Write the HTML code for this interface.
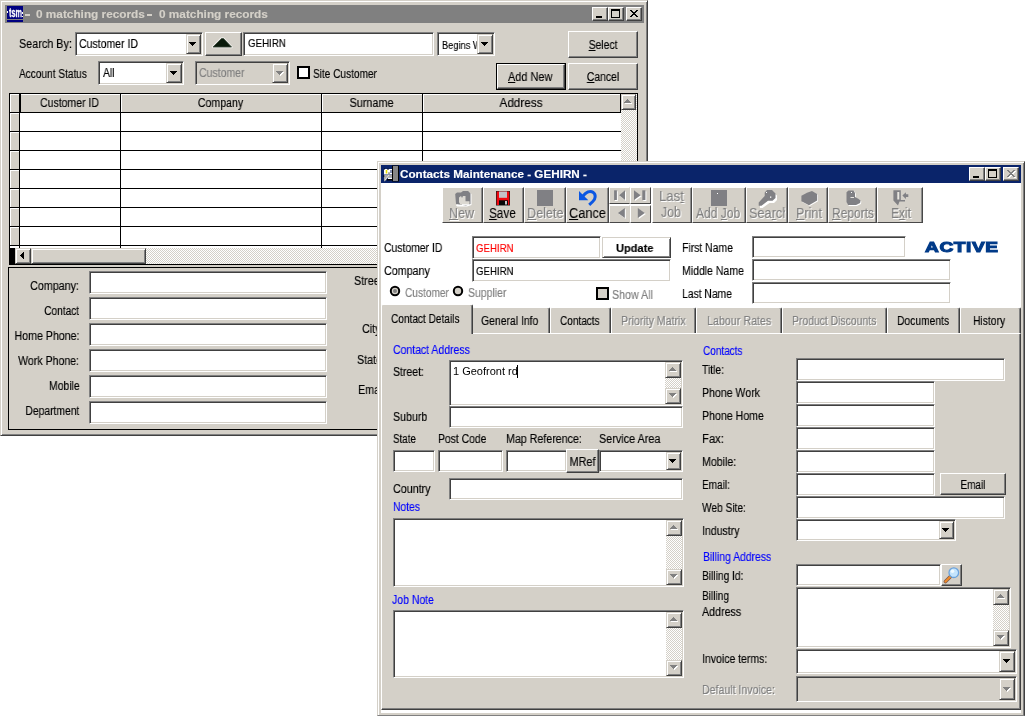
<!DOCTYPE html>
<html><head><meta charset="utf-8"><title>Contacts Maintenance</title>
<style>
html,body{margin:0;padding:0;overflow:hidden;}
body{width:1025px;height:716px;background:#fff;position:relative;overflow:hidden;font-family:"Liberation Sans",sans-serif;font-size:12px;color:#000;}
div,svg{position:absolute;box-sizing:border-box;}
.t{white-space:nowrap;line-height:14px;font-size:12px;will-change:transform;-webkit-text-stroke:0.15px;}
.b{font-weight:bold;}
.sk{border:1px solid;border-color:#808080 #fff #fff #808080;box-shadow:inset 1px 1px 0 #404040,inset -1px -1px 0 #d4d0c8;}
.rb{background:#d4d0c8;border:1px solid;border-color:#fff #404040 #404040 #fff;box-shadow:inset -1px -1px 0 #808080,inset 1px 1px 0 #d4d0c8;}
.sb{background:#d4d0c8;border:1px solid;border-color:#d4d0c8 #404040 #404040 #d4d0c8;box-shadow:inset 1px 1px 0 #fff,inset -1px -1px 0 #808080;}
.win{background:#d4d0c8;border:1px solid;border-color:#d4d0c8 #404040 #404040 #d4d0c8;box-shadow:inset 1px 1px 0 #fff,inset -1px -1px 0 #808080;}
.trk{background-color:#e9e7e3;background-image:linear-gradient(45deg,#fff 25%,transparent 25%,transparent 75%,#fff 75%),linear-gradient(45deg,#fff 25%,transparent 25%,transparent 75%,#fff 75%);background-size:2px 2px;background-position:0 0,1px 1px;background-color:#d4d0c8;}
.c{text-align:center;}
.r{text-align:right;}
u{text-decoration:underline;}
</style></head><body>
<div class="win" style="left:0px;top:0px;width:648px;height:436px;"></div>
<div class="" style="left:5px;top:5px;width:639px;height:18px;background:#808080;"></div>
<div class="" style="left:7px;top:6px;width:16px;height:13px;background:#000080;"></div>
<div class="" style="left:7px;top:20px;width:16px;height:2px;background:#000080;"></div>
<div class="t" style="top:6.0px;font-size:12px;line-height:14px;font-weight:bold;left:8.5px;transform-origin:0 0;transform:scaleX(0.604);color:#fff;-webkit-text-stroke:0.3px #fff;">tsm</div>
<div class="" style="left:7px;top:11px;width:1px;height:2px;background:#fff;"></div>
<div class="" style="left:21.5px;top:12px;width:1px;height:1.5px;background:#fff;"></div>
<div class="" style="left:21.5px;top:15.5px;width:1px;height:1.5px;background:#fff;"></div>
<div class="" style="left:25px;top:14px;width:4.5px;height:1.5px;background:#d4d0c8;"></div>
<div class="" style="left:147px;top:14px;width:4.5px;height:1.5px;background:#d4d0c8;"></div>
<div class="t" style="top:7.2px;font-size:11px;line-height:14px;font-weight:bold;left:35.5px;transform-origin:0 0;transform:scaleX(1.073);color:#d4d0c8;">0 matching records</div>
<div class="t" style="top:7.2px;font-size:11px;line-height:14px;font-weight:bold;left:158.8px;transform-origin:0 0;transform:scaleX(1.073);color:#d4d0c8;">0 matching records</div>
<div class="rb" style="left:592px;top:7px;width:16px;height:14px;"></div>
<div class="" style="left:596px;top:16px;width:6px;height:2px;background:#000;"></div>
<div class="rb" style="left:608px;top:7px;width:16px;height:14px;"></div>
<div class="" style="left:611px;top:9px;width:9px;height:9px;border:1px solid #000;border-top:2px solid #000;"></div>
<div class="rb" style="left:626px;top:7px;width:16px;height:14px;"></div>
<svg style="left:630px;top:10px" width="9" height="8" shape-rendering="crispEdges"><path d="M0 0h2v1h1v1h2v-1h1v-1h2v1h-1v1h-1v1h-1v1h1v1h1v1h1v1h-2v-1h-1v-1h-2v1h-1v1h-2v-1h1v-1h1v-1h1v-1h-1v-1h-1v-1h-1z" fill="#000"/></svg>
<div class="t" style="top:37.2px;font-size:12.5px;line-height:14.5px;left:19.0px;transform-origin:0 0;transform:scaleX(0.865);">Search By:</div>
<div class="sk" style="left:75px;top:32px;width:128px;height:24px;background:#fff;"></div>
<div class="sb" style="left:186px;top:34px;width:15px;height:20px;"></div>
<svg class="a" style="left:189px;top:42px" width="7" height="4" shape-rendering="crispEdges"><path d="M0 0h7v1h-1v1h-1v1h-1v1h-1v-1h-1v-1h-1v-1h-1z" fill="#000"/></svg>
<div class="t" style="top:37.0px;font-size:12.5px;line-height:14.5px;left:79.1px;transform-origin:0 0;transform:scaleX(0.840);color:#000;">Customer ID</div>
<div class="rb" style="left:205px;top:32px;width:37px;height:24px;"></div>
<svg style="left:211px;top:35px" width="23" height="15"><path d="M10.500 3.500 h2 L20.500 12 H2 Z" fill="#0a1a0a" stroke="#eceae6" stroke-width="2.500" stroke-linejoin="round"/><path d="M10.500 3.500 h2 L20.500 12 H2 Z" fill="#0a1a0a" stroke="#3a4a3a" stroke-width="0.800" stroke-linejoin="round"/></svg>
<div class="sk" style="left:243px;top:32px;width:191px;height:24px;background:#fff;"></div>
<div class="t" style="top:36.0px;font-size:11px;line-height:14px;left:247.5px;transform-origin:0 0;transform:scaleX(0.886);">GEHIRN</div>
<div class="sk" style="left:437px;top:32px;width:58px;height:24px;background:#fff;"></div>
<div class="sb" style="left:477px;top:34px;width:16px;height:20px;"></div>
<svg class="a" style="left:481px;top:42px" width="7" height="4" shape-rendering="crispEdges"><path d="M0 0h7v1h-1v1h-1v1h-1v1h-1v-1h-1v-1h-1v-1h-1z" fill="#000"/></svg>
<div class="t" style="top:37.6px;font-size:11px;line-height:14px;left:441.6px;transform-origin:0 0;transform:scaleX(0.840);color:#000;width:41.5px;overflow:hidden;">Begins W</div>
<div class="rb" style="left:568px;top:31px;width:70px;height:27px;"><div class="t" style="left:0;top:6px;width:68px;text-align:center;transform:scaleX(0.830);font-size:12.5px;"><u>S</u>elect</div></div>
<div class="t" style="top:66.7px;font-size:12.5px;line-height:14.5px;left:18.5px;transform-origin:0 0;transform:scaleX(0.808);">Account Status</div>
<div class="sk" style="left:98px;top:61px;width:86px;height:24px;background:#fff;"></div>
<div class="sb" style="left:166px;top:63px;width:16px;height:20px;"></div>
<svg class="a" style="left:170px;top:71px" width="7" height="4" shape-rendering="crispEdges"><path d="M0 0h7v1h-1v1h-1v1h-1v1h-1v-1h-1v-1h-1v-1h-1z" fill="#000"/></svg>
<div class="t" style="top:66.0px;font-size:12.5px;line-height:14.5px;left:102.6px;transform-origin:0 0;transform:scaleX(0.830);color:#000;">All</div>
<div class="sk" style="left:195px;top:61px;width:95px;height:24px;background:#d4d0c8;"></div>
<div class="sb" style="left:272px;top:63px;width:16px;height:20px;"></div>
<svg class="a" style="left:277px;top:72px" width="7" height="4" shape-rendering="crispEdges"><path d="M0 0h7v1h-1v1h-1v1h-1v1h-1v-1h-1v-1h-1v-1h-1z" fill="#fff"/></svg>
<svg class="a" style="left:276px;top:71px" width="7" height="4" shape-rendering="crispEdges"><path d="M0 0h7v1h-1v1h-1v1h-1v1h-1v-1h-1v-1h-1v-1h-1z" fill="#808080"/></svg>
<div class="t" style="top:66.0px;font-size:12.5px;line-height:14.5px;left:199.1px;transform-origin:0 0;transform:scaleX(0.840);color:#808080;">Customer</div>
<div class="" style="left:297px;top:66px;width:13px;height:13px;background:#fff;border:2px solid #000;"></div>
<div class="t" style="top:66.9px;font-size:12.5px;line-height:14.5px;left:313.0px;transform-origin:0 0;transform:scaleX(0.807);">Site Customer</div>
<div class="" style="left:496px;top:63px;width:70px;height:27px;background:#000;"></div>
<div class="rb" style="left:497px;top:64px;width:68px;height:25px;"></div>
<div class="t" style="top:70.4px;font-size:12.5px;line-height:14.5px;left:507.5px;transform-origin:0 0;transform:scaleX(0.873);"><u>A</u>dd New</div>
<div class="rb" style="left:568px;top:63px;width:70px;height:27px;"><div class="t" style="left:0;top:6px;width:68px;text-align:center;transform:scaleX(0.830);font-size:12.5px;"><u>C</u>ancel</div></div>
<div class="" style="left:9px;top:93px;width:629px;height:172px;background:#fff;border:1px solid #000;"></div>
<div class="" style="left:10px;top:94px;width:610px;height:18px;background:#d4d0c8;"></div>
<div class="" style="left:10px;top:94px;width:9px;height:152px;background:#d4d0c8;"></div>
<div class="" style="left:10px;top:94px;width:9px;height:18px;border-left:1px solid #fff;border-top:1px solid #fff;"></div>
<div class="" style="left:10px;top:113px;width:9px;height:18px;border-left:1px solid #fff;border-top:1px solid #fff;"></div>
<div class="" style="left:10px;top:132px;width:9px;height:18px;border-left:1px solid #fff;border-top:1px solid #fff;"></div>
<div class="" style="left:10px;top:151px;width:9px;height:18px;border-left:1px solid #fff;border-top:1px solid #fff;"></div>
<div class="" style="left:10px;top:170px;width:9px;height:18px;border-left:1px solid #fff;border-top:1px solid #fff;"></div>
<div class="" style="left:10px;top:189px;width:9px;height:18px;border-left:1px solid #fff;border-top:1px solid #fff;"></div>
<div class="" style="left:10px;top:208px;width:9px;height:18px;border-left:1px solid #fff;border-top:1px solid #fff;"></div>
<div class="" style="left:10px;top:227px;width:9px;height:18px;border-left:1px solid #fff;border-top:1px solid #fff;"></div>
<div class="" style="left:20px;top:94px;width:1px;height:18px;background:#fff;"></div>
<div class="" style="left:121px;top:94px;width:1px;height:18px;background:#fff;"></div>
<div class="" style="left:322px;top:94px;width:1px;height:18px;background:#fff;"></div>
<div class="" style="left:423px;top:94px;width:1px;height:18px;background:#fff;"></div>
<div class="" style="left:20px;top:94px;width:600px;height:1px;background:#fff;"></div>
<div class="" style="left:19px;top:93px;width:1px;height:155px;background:#000;"></div>
<div class="" style="left:120px;top:93px;width:1px;height:155px;background:#000;"></div>
<div class="" style="left:321px;top:93px;width:1px;height:155px;background:#000;"></div>
<div class="" style="left:422px;top:93px;width:1px;height:155px;background:#000;"></div>
<div class="" style="left:620px;top:93px;width:1px;height:20px;background:#000;"></div>
<div class="" style="left:20px;top:93px;width:1px;height:19px;background:#000;"></div>
<div class="" style="left:9px;top:112px;width:612px;height:1px;background:#000;"></div>
<div class="" style="left:9px;top:131px;width:612px;height:1px;background:#000;"></div>
<div class="" style="left:9px;top:150px;width:612px;height:1px;background:#000;"></div>
<div class="" style="left:9px;top:169px;width:612px;height:1px;background:#000;"></div>
<div class="" style="left:9px;top:188px;width:612px;height:1px;background:#000;"></div>
<div class="" style="left:9px;top:207px;width:612px;height:1px;background:#000;"></div>
<div class="" style="left:9px;top:226px;width:612px;height:1px;background:#000;"></div>
<div class="" style="left:9px;top:245px;width:612px;height:1px;background:#000;"></div>
<div class="t" style="top:96.1px;font-size:12.5px;line-height:14.5px;left:19px;width:101px;text-align:center;transform-origin:50% 0;transform:scaleX(0.840);">Customer ID</div>
<div class="t" style="top:96.1px;font-size:12.5px;line-height:14.5px;left:120px;width:201px;text-align:center;transform-origin:50% 0;transform:scaleX(0.849);">Company</div>
<div class="t" style="top:96.1px;font-size:12.5px;line-height:14.5px;left:321px;width:101px;text-align:center;transform-origin:50% 0;transform:scaleX(0.866);">Surname</div>
<div class="t" style="top:96.1px;font-size:12.5px;line-height:14.5px;left:422px;width:198px;text-align:center;transform-origin:50% 0;transform:scaleX(0.936);">Address</div>
<div class="trk" style="left:621px;top:94px;width:16px;height:154px;"></div>
<div class="sb" style="left:621px;top:94px;width:15px;height:16px;"></div>
<svg class="a" style="left:625px;top:100px" width="7" height="4" shape-rendering="crispEdges"><path d="M3 0h1v1h1v1h1v1h1v1h-7v-1h1v-1h1v-1h1z" fill="#fff"/></svg>
<svg class="a" style="left:624px;top:99px" width="7" height="4" shape-rendering="crispEdges"><path d="M3 0h1v1h1v1h1v1h1v1h-7v-1h1v-1h1v-1h1z" fill="#808080"/></svg>
<div class="trk" style="left:10px;top:248px;width:627px;height:16px;"></div>
<div class="" style="left:9px;top:248px;width:6px;height:17px;background:#000;"></div>
<div class="sb" style="left:15px;top:248px;width:16px;height:16px;"></div>
<svg class="a" style="left:20px;top:252px" width="4" height="7" shape-rendering="crispEdges"><path d="M3 0h1v7h-1v-1h-1v-1h-1v-1h-1v-1h1v-1h1v-1h1z" fill="#000"/></svg>
<div class="sb" style="left:31px;top:248px;width:115px;height:16px;"></div>
<div class="" style="left:8px;top:267px;width:632px;height:163px;border:1px solid #000;"></div>
<div class="t" style="top:279.4px;font-size:12.5px;line-height:14.5px;right:945.6px;transform-origin:100% 0;transform:scaleX(0.858);">Company:</div>
<div class="sk" style="left:89px;top:271px;width:238px;height:23px;background:#fff;"></div>
<div class="t" style="top:304.4px;font-size:12.5px;line-height:14.5px;right:945.6px;transform-origin:100% 0;transform:scaleX(0.810);">Contact</div>
<div class="sk" style="left:89px;top:297px;width:238px;height:23px;background:#fff;"></div>
<div class="t" style="top:329.4px;font-size:12.5px;line-height:14.5px;right:945.6px;transform-origin:100% 0;transform:scaleX(0.849);">Home Phone:</div>
<div class="sk" style="left:89px;top:323px;width:238px;height:23px;background:#fff;"></div>
<div class="t" style="top:354.4px;font-size:12.5px;line-height:14.5px;right:945.6px;transform-origin:100% 0;transform:scaleX(0.846);">Work Phone:</div>
<div class="sk" style="left:89px;top:349px;width:238px;height:23px;background:#fff;"></div>
<div class="t" style="top:379.4px;font-size:12.5px;line-height:14.5px;right:945.6px;transform-origin:100% 0;transform:scaleX(0.839);">Mobile</div>
<div class="sk" style="left:89px;top:375px;width:238px;height:23px;background:#fff;"></div>
<div class="t" style="top:403.9px;font-size:12.5px;line-height:14.5px;right:945.6px;transform-origin:100% 0;transform:scaleX(0.825);">Department</div>
<div class="sk" style="left:89px;top:401px;width:238px;height:23px;background:#fff;"></div>
<div class="t" style="top:274.0px;font-size:12.5px;line-height:14.5px;left:353.5px;transform-origin:0 0;transform:scaleX(0.860);">Street:</div>
<div class="t" style="top:322.2px;font-size:12.5px;line-height:14.5px;left:362.3px;transform-origin:0 0;transform:scaleX(0.860);">City:</div>
<div class="t" style="top:353.1px;font-size:12.5px;line-height:14.5px;left:357.3px;transform-origin:0 0;transform:scaleX(0.860);">State:</div>
<div class="t" style="top:383.2px;font-size:12.5px;line-height:14.5px;left:358.3px;transform-origin:0 0;transform:scaleX(0.860);">Email:</div>
<div class="win" style="left:377px;top:161px;width:648px;height:555px;border-bottom-color:#808080;box-shadow:inset 1px 1px 0 #fff,inset -1px 0 0 #808080;"></div>
<div class="" style="left:381px;top:165px;width:640px;height:548px;background:#fff;"></div>
<div class="" style="left:381px;top:165px;width:640px;height:18px;background:#0a246a;"></div>
<div class="t" style="top:167.4px;font-size:11px;line-height:14px;font-weight:bold;left:400.1px;transform-origin:0 0;transform:scaleX(1.062);color:#fff;">Contacts Maintenance - GEHIRN -</div>
<svg style="left:383px;top:165px" width="17" height="18" viewBox="383 165 17 18"><rect x="392" y="165.500" width="7" height="16" fill="#000"/><rect x="393" y="166" width="5" height="15" fill="#868686"/><rect x="384" y="169" width="8" height="5.500" fill="#fff"/><rect x="384" y="168.500" width="1" height="1" fill="#000"/><rect x="387.500" y="168.500" width="1" height="1.500" fill="#000"/><rect x="385.700" y="170" width="1.600" height="3.500" fill="#e8e000"/><rect x="388.500" y="172.500" width="1" height="1.200" fill="#000"/><rect x="390.500" y="170" width="1" height="3" fill="#0a246a"/><path d="M384 175h8v2.500h-4l-3 3.800h-1z" fill="#a8a8a8"/><path d="M385 180l4-5" stroke="#e0e0e0" stroke-width="1"/><rect x="388" y="177.500" width="4" height="1.500" fill="#fff"/><rect x="387" y="179" width="5" height="1.500" fill="#000"/><rect x="383.300" y="175.300" width="1" height="1.500" fill="#000"/></svg>
<div class="rb" style="left:969px;top:167px;width:16px;height:14px;"></div>
<div class="" style="left:973px;top:176px;width:6px;height:2px;background:#000;"></div>
<div class="rb" style="left:985px;top:167px;width:16px;height:14px;"></div>
<div class="" style="left:988px;top:169px;width:9px;height:9px;border:1px solid #000;border-top:2px solid #000;"></div>
<div class="rb" style="left:1003px;top:167px;width:16px;height:14px;"></div>
<svg style="left:1007px;top:170px" width="10" height="9" shape-rendering="crispEdges"><path d="M1 1h2v1h1v1h2v-1h1v-1h2v1h-1v1h-1v1h-1v1h1v1h1v1h1v1h-2v-1h-1v-1h-2v1h-1v1h-2v-1h1v-1h1v-1h1v-1h-1v-1h-1v-1h-1z" fill="#fff"/><path d="M0 0h2v1h1v1h2v-1h1v-1h2v1h-1v1h-1v1h-1v1h1v1h1v1h1v1h-2v-1h-1v-1h-2v1h-1v1h-2v-1h1v-1h1v-1h1v-1h-1v-1h-1v-1h-1z" fill="#808080"/></svg>
<div class="" style="left:442px;top:187px;width:41px;height:36px;background:#d4d0c8;border:1px solid;border-color:#fff #484848 #484848 #fff;box-shadow:inset -1px 0 0 #8c8c8c;overflow:hidden;"></div>
<div class="" style="left:483px;top:187px;width:41px;height:36px;background:#d4d0c8;border:1px solid;border-color:#fff #484848 #484848 #fff;box-shadow:inset -1px 0 0 #8c8c8c;overflow:hidden;"></div>
<div class="" style="left:524px;top:187px;width:42px;height:36px;background:#d4d0c8;border:1px solid;border-color:#fff #484848 #484848 #fff;box-shadow:inset -1px 0 0 #8c8c8c;overflow:hidden;"></div>
<div class="" style="left:565.5px;top:187px;width:43.0px;height:36px;background:#d4d0c8;border:1px solid;border-color:#fff #484848 #484848 #fff;box-shadow:inset -1px 0 0 #8c8c8c;overflow:hidden;"></div>
<div class="" style="left:651.5px;top:187px;width:40.0px;height:36px;background:#d4d0c8;border:1px solid;border-color:#fff #484848 #484848 #fff;box-shadow:inset -1px 0 0 #8c8c8c;overflow:hidden;"></div>
<div class="" style="left:691.5px;top:187px;width:54.0px;height:36px;background:#d4d0c8;border:1px solid;border-color:#fff #484848 #484848 #fff;box-shadow:inset -1px 0 0 #8c8c8c;overflow:hidden;"></div>
<div class="" style="left:745.5px;top:187px;width:42.5px;height:36px;background:#d4d0c8;border:1px solid;border-color:#fff #484848 #484848 #fff;box-shadow:inset -1px 0 0 #8c8c8c;overflow:hidden;"></div>
<div class="" style="left:788.2px;top:187px;width:39.799999999999955px;height:36px;background:#d4d0c8;border:1px solid;border-color:#fff #484848 #484848 #fff;box-shadow:inset -1px 0 0 #8c8c8c;overflow:hidden;"></div>
<div class="" style="left:828.2px;top:187px;width:48.799999999999955px;height:36px;background:#d4d0c8;border:1px solid;border-color:#fff #484848 #484848 #fff;box-shadow:inset -1px 0 0 #8c8c8c;overflow:hidden;"></div>
<div class="" style="left:877px;top:187px;width:46px;height:36px;background:#d4d0c8;border:1px solid;border-color:#fff #484848 #484848 #fff;box-shadow:inset -1px 0 0 #8c8c8c;overflow:hidden;"></div>
<div class="t" style="top:205.9px;font-size:14px;line-height:16px;left:450.2px;transform-origin:0 0;transform:scaleX(0.889);color:#fff;-webkit-text-stroke:0.1px;"><u>N</u>ew</div>
<div class="t" style="top:204.9px;font-size:14px;line-height:16px;left:449.2px;transform-origin:0 0;transform:scaleX(0.889);color:#808080;-webkit-text-stroke:0.1px;"><u>N</u>ew</div>
<div class="t" style="top:204.9px;font-size:14px;line-height:16px;left:489.1px;transform-origin:0 0;transform:scaleX(0.837);-webkit-text-stroke:0.1px;"><u>S</u>ave</div>
<div class="t" style="top:205.9px;font-size:14px;line-height:16px;left:527.8px;transform-origin:0 0;transform:scaleX(0.899);color:#fff;-webkit-text-stroke:0.1px;"><u>D</u>elete</div>
<div class="t" style="top:204.9px;font-size:14px;line-height:16px;left:526.8px;transform-origin:0 0;transform:scaleX(0.899);color:#808080;-webkit-text-stroke:0.1px;"><u>D</u>elete</div>
<div class="t" style="top:204.9px;font-size:14px;line-height:16px;left:569.1px;transform-origin:0 0;transform:scaleX(0.910);-webkit-text-stroke:0.1px;width:41px;overflow:hidden;"><u>C</u>ancel</div>
<div class="t" style="top:189.3px;font-size:14px;line-height:16px;left:660.2px;transform-origin:0 0;transform:scaleX(0.941);color:#fff;-webkit-text-stroke:0.1px;">Las<u>t</u></div>
<div class="t" style="top:188.3px;font-size:14px;line-height:16px;left:659.2px;transform-origin:0 0;transform:scaleX(0.941);color:#808080;-webkit-text-stroke:0.1px;">Las<u>t</u></div>
<div class="t" style="top:205.1px;font-size:14px;line-height:16px;left:662.3px;transform-origin:0 0;transform:scaleX(0.882);color:#fff;-webkit-text-stroke:0.1px;">Job</div>
<div class="t" style="top:204.1px;font-size:14px;line-height:16px;left:661.3px;transform-origin:0 0;transform:scaleX(0.882);color:#808080;-webkit-text-stroke:0.1px;">Job</div>
<div class="t" style="top:205.7px;font-size:14px;line-height:16px;left:696.7px;transform-origin:0 0;transform:scaleX(0.862);color:#fff;-webkit-text-stroke:0.1px;">Add <u>J</u>ob</div>
<div class="t" style="top:204.7px;font-size:14px;line-height:16px;left:695.7px;transform-origin:0 0;transform:scaleX(0.862);color:#808080;-webkit-text-stroke:0.1px;">Add <u>J</u>ob</div>
<div class="t" style="top:205.9px;font-size:14px;line-height:16px;left:750.4px;transform-origin:0 0;transform:scaleX(0.910);-webkit-text-stroke:0.1px;color:#fff;width:40px;overflow:hidden;">Sea<u>r</u>ch</div>
<div class="t" style="top:204.9px;font-size:14px;line-height:16px;left:749.4px;transform-origin:0 0;transform:scaleX(0.910);-webkit-text-stroke:0.1px;color:#808080;width:40px;overflow:hidden;">Sea<u>r</u>ch</div>
<div class="t" style="top:205.9px;font-size:14px;line-height:16px;left:797.3px;transform-origin:0 0;transform:scaleX(0.900);color:#fff;-webkit-text-stroke:0.1px;"><u>P</u>rint</div>
<div class="t" style="top:204.9px;font-size:14px;line-height:16px;left:796.3px;transform-origin:0 0;transform:scaleX(0.900);color:#808080;-webkit-text-stroke:0.1px;"><u>P</u>rint</div>
<div class="t" style="top:205.9px;font-size:14px;line-height:16px;left:833.0px;transform-origin:0 0;transform:scaleX(0.855);color:#fff;-webkit-text-stroke:0.1px;"><u>R</u>eports</div>
<div class="t" style="top:204.9px;font-size:14px;line-height:16px;left:832.0px;transform-origin:0 0;transform:scaleX(0.855);color:#808080;-webkit-text-stroke:0.1px;"><u>R</u>eports</div>
<div class="t" style="top:205.9px;font-size:14px;line-height:16px;left:891.6px;transform-origin:0 0;transform:scaleX(0.853);color:#fff;-webkit-text-stroke:0.1px;">E<u>x</u>it</div>
<div class="t" style="top:204.9px;font-size:14px;line-height:16px;left:890.6px;transform-origin:0 0;transform:scaleX(0.853);color:#808080;-webkit-text-stroke:0.1px;">E<u>x</u>it</div>
<div class="" style="left:609px;top:187px;width:21px;height:17px;background:#d4d0c8;border:1px solid;border-color:#fff #d4d0c8 #484848 #fff;"></div>
<div class="" style="left:630px;top:187px;width:21px;height:17px;background:#d4d0c8;border:1px solid;border-color:#fff #484848 #484848 #fff;"></div>
<div class="" style="left:609px;top:205px;width:21px;height:18px;background:#d4d0c8;border:1px solid;border-color:#fff #d4d0c8 #484848 #fff;"></div>
<div class="" style="left:630px;top:205px;width:21px;height:18px;background:#d4d0c8;border:1px solid;border-color:#fff #484848 #484848 #fff;"></div>
<svg style="left:440px;top:186px" width="490" height="40" viewBox="440 186 490 40">
<g fill="#fff"><path d="M464 192h5l2.500 2v11l-4.500 1.500h-10l-1-1z"/></g>
<path d="M463 191h5l2.500 2.200v10.800l-4.500 1.500l-10-1.500l-0.800-10l1.800-1.500h4z" fill="#808084"/>
<path d="M459 197.500l2-1.500l1 2l1-2h2.500v5.200h4v2.500l-3 1h-6l-1.500-2.500z" fill="#dcd9d2"/>
<path d="M462 204.700h7.500" stroke="#fff" stroke-width="1"/>
<rect x="496" y="191" width="14" height="14.500" fill="#1a1a1a"/>
<rect x="496.700" y="191.500" width="12.600" height="13.500" fill="#f00810"/>
<rect x="499" y="191.500" width="8" height="6.300" fill="#c4c2c8"/>
<rect x="499" y="200.300" width="9" height="4.700" fill="#080808"/>
<rect x="505" y="201" width="2" height="3.500" fill="#c4c2c8"/>
<rect x="537" y="190" width="16" height="16" fill="#808084"/>
<path d="M579 191L579 200.200L588.300 200.200Z" fill="#0b57e3"/>
<path d="M583 196C586 192.300 590 190.300 593 192.300C596.300 194.500 595.500 199 592.800 201.500L589.200 204.800" stroke="#0b57e3" stroke-width="3" fill="none"/>
<g fill="#fff"><rect x="615" y="191.300" width="2.800" height="9.700"/><path d="M626 191.300v9.700l-5.800-4.850z"/><path d="M635 191.300v9.700l6.700-4.850z"/><rect x="643.300" y="191.300" width="3.100" height="9.700"/><path d="M625.800 209v10l-6.800-5z"/><path d="M638.800 209v10l7-5z"/></g>
<g fill="#808084"><rect x="614.100" y="190.300" width="2.800" height="9.700"/><path d="M625 190.300v9.700l-5.800-4.850z"/><path d="M634 190.300v9.700l6.700-4.850z"/><rect x="642.300" y="190.300" width="3.100" height="9.700"/><path d="M624.800 208v10l-6.800-5z"/><path d="M637.800 208v10l7-5z"/></g>
<rect x="711" y="190" width="16" height="16" fill="#808084"/><rect x="717" y="193" width="1" height="1" fill="#fff"/>
<path d="M767.500 191l4 0l4.500 3.500v4.500l-3 3h-4.500l-7 5h-2.500v-3.500l6-6.500v-3.500z" fill="#fff" transform="translate(1,1)"/>
<path d="M767 190l5 0l3.500 3.500v4.500l-3 2.800h-4.500l-6.500 5h-2.800v-3.300l6-6.500v-3.500z" fill="#808084"/>
<rect x="766" y="192" width="1" height="1" fill="#fff"/><rect x="770" y="196.500" width="1.300" height="1.300" fill="#fff"/>
<path d="M812 191l5.200 3v6.500l-8.200 4.700l-7.600-4v-5.500l5.600-3z" fill="#fff" transform="translate(0.800,0.800)"/>
<path d="M812 191l5.200 3v6.500l-8.200 4.700l-7.600-4v-5.500l5.600-3z" fill="#808084"/>
<path d="M848.500 190.400h5l1.500 2.500v4l3 1.500l2.600 2.200l-0.500 2.500l-4 2h-8l-1.600-3v-9.800z" fill="#fff" transform="translate(0.800,0.800)"/>
<path d="M848.500 190.400h5l1.500 2.500v4l3 1.500l2.600 2.200l-0.500 2.500l-4 2h-8l-1.600-3v-9.800z" fill="#808084"/>
<rect x="850.500" y="197" width="3.500" height="1" fill="#e8e6e0"/><rect x="851" y="192" width="1" height="1" fill="#fff"/>
<path d="M893.400 190.300h7.400v9.700h4.200v1.500h-5.500l-1.500 4l-4.600-5z" fill="#808084"/>
<rect x="897.300" y="192" width="2" height="7.500" fill="#e8e6e0"/>
<path d="M902.400 195.500l3.500-3.300v2h2.400v2.800h-2.400v2z" fill="#808084"/>
</svg>
<div class="t" style="top:240.8px;font-size:12.5px;line-height:14.5px;left:384.2px;transform-origin:0 0;transform:scaleX(0.831);">Customer ID</div>
<div class="sk" style="left:472px;top:236px;width:129px;height:23px;background:#fff;"></div>
<div class="t" style="top:241.1px;font-size:11px;line-height:14px;left:476.3px;transform-origin:0 0;transform:scaleX(0.877);color:#ff0000;">GEHIRN</div>
<div class="sb" style="left:602px;top:237px;width:69px;height:21px;background:#fff;"></div>
<div class="t" style="top:240.8px;font-size:11.5px;line-height:14px;font-weight:bold;left:616.2px;transform-origin:0 0;transform:scaleX(0.962);">Update</div>
<div class="t" style="top:263.8px;font-size:12.5px;line-height:14.5px;left:384.2px;transform-origin:0 0;transform:scaleX(0.858);">Company</div>
<div class="sk" style="left:472px;top:259px;width:199px;height:23px;background:#fff;"></div>
<div class="t" style="top:264.0px;font-size:11px;line-height:14px;left:476.3px;transform-origin:0 0;transform:scaleX(0.877);">GEHIRN</div>
<svg style="left:389px;top:285px" width="12" height="12"><circle cx="6" cy="6" r="4.200" fill="#d4d0c8" stroke="#000" stroke-width="2"/><circle cx="6" cy="6" r="2" fill="#808080"/></svg>
<div class="t" style="top:286.4px;font-size:12.5px;line-height:14.5px;left:405.0px;transform-origin:0 0;transform:scaleX(0.810);color:#808080;">Customer</div>
<svg style="left:452px;top:285px" width="12" height="12"><circle cx="6" cy="6" r="4.200" fill="#d4d0c8" stroke="#000" stroke-width="2"/></svg>
<div class="t" style="top:286.3px;font-size:12.5px;line-height:14.5px;left:468.0px;transform-origin:0 0;transform:scaleX(0.837);color:#808080;">Supplier</div>
<div class="" style="left:596px;top:287px;width:13px;height:13px;background:#d4d0c8;border:2px solid #000;"></div>
<div class="t" style="top:287.8px;font-size:12.5px;line-height:14.5px;left:612.1px;transform-origin:0 0;transform:scaleX(0.853);color:#808080;">Show All</div>
<div class="t" style="top:240.6px;font-size:12.5px;line-height:14.5px;left:682.0px;transform-origin:0 0;transform:scaleX(0.833);">First Name</div>
<div class="sk" style="left:752px;top:236px;width:154px;height:22px;background:#fff;"></div>
<div class="t" style="top:263.8px;font-size:12.5px;line-height:14.5px;left:682.0px;transform-origin:0 0;transform:scaleX(0.841);">Middle Name</div>
<div class="sk" style="left:752px;top:259px;width:199px;height:22px;background:#fff;"></div>
<div class="t" style="top:286.7px;font-size:12.5px;line-height:14.5px;left:682.0px;transform-origin:0 0;transform:scaleX(0.826);">Last Name</div>
<div class="sk" style="left:752px;top:282px;width:199px;height:22px;background:#fff;"></div>
<div class="t" style="top:238.0px;font-size:15.5px;line-height:18px;font-weight:bold;left:924.8px;transform-origin:0 0;transform:scaleX(1.230);color:#003a88;-webkit-text-stroke:1.1px #003a88;letter-spacing:0.5px;">ACTIVE</div>
<div class="" style="left:381px;top:333px;width:640px;height:377px;background:#d4d0c8;border:1px solid;border-color:#fff #404040 #404040 #fff;box-shadow:inset -1px -1px 0 #808080;"></div>
<div class="" style="left:381px;top:304px;width:92px;height:30px;background:#d4d0c8;border:1px solid;border-color:#fff #404040 #d4d0c8 #fff;border-bottom:none;border-radius:2px 2px 0 0;box-shadow:inset -1px 0 0 #808080;"></div>
<div class="t" style="top:311.8px;font-size:12.5px;line-height:14.5px;left:391.0px;transform-origin:0 0;transform:scaleX(0.808);">Contact Details</div>
<div class="" style="left:473px;top:307px;width:77px;height:26px;background:#d4d0c8;border:1px solid;border-color:#fff #404040 #fff #fff;border-bottom:none;border-radius:2px 2px 0 0;box-shadow:inset -1px 0 0 #808080;border-left-color:#d4d0c8;"></div>
<div class="t" style="top:313.6px;font-size:12.5px;line-height:14.5px;left:481.1px;transform-origin:0 0;transform:scaleX(0.833);">General Info</div>
<div class="" style="left:550px;top:307px;width:61px;height:26px;background:#d4d0c8;border:1px solid;border-color:#fff #404040 #fff #fff;border-bottom:none;border-radius:2px 2px 0 0;box-shadow:inset -1px 0 0 #808080;"></div>
<div class="t" style="top:313.6px;font-size:12.5px;line-height:14.5px;left:560.0px;transform-origin:0 0;transform:scaleX(0.803);">Contacts</div>
<div class="" style="left:610.5px;top:307px;width:85.5px;height:26px;background:#d4d0c8;border:1px solid;border-color:#fff #404040 #fff #fff;border-bottom:none;border-radius:2px 2px 0 0;box-shadow:inset -1px 0 0 #808080;"></div>
<div class="t" style="top:314.6px;font-size:12.5px;line-height:14.5px;left:622.2px;transform-origin:0 0;transform:scaleX(0.846);color:#fff;">Priority Matrix</div>
<div class="t" style="top:313.6px;font-size:12.5px;line-height:14.5px;left:621.2px;transform-origin:0 0;transform:scaleX(0.846);color:#808080;">Priority Matrix</div>
<div class="" style="left:695.5px;top:307px;width:86.5px;height:26px;background:#d4d0c8;border:1px solid;border-color:#fff #404040 #fff #fff;border-bottom:none;border-radius:2px 2px 0 0;box-shadow:inset -1px 0 0 #808080;"></div>
<div class="t" style="top:314.6px;font-size:12.5px;line-height:14.5px;left:707.7px;transform-origin:0 0;transform:scaleX(0.857);color:#fff;">Labour Rates</div>
<div class="t" style="top:313.6px;font-size:12.5px;line-height:14.5px;left:706.7px;transform-origin:0 0;transform:scaleX(0.857);color:#808080;">Labour Rates</div>
<div class="" style="left:781.5px;top:307px;width:105.5px;height:26px;background:#d4d0c8;border:1px solid;border-color:#fff #404040 #fff #fff;border-bottom:none;border-radius:2px 2px 0 0;box-shadow:inset -1px 0 0 #808080;"></div>
<div class="t" style="top:314.6px;font-size:12.5px;line-height:14.5px;left:793.1px;transform-origin:0 0;transform:scaleX(0.831);color:#fff;">Product Discounts</div>
<div class="t" style="top:313.6px;font-size:12.5px;line-height:14.5px;left:792.1px;transform-origin:0 0;transform:scaleX(0.831);color:#808080;">Product Discounts</div>
<div class="" style="left:886.5px;top:307px;width:73.5px;height:26px;background:#d4d0c8;border:1px solid;border-color:#fff #404040 #fff #fff;border-bottom:none;border-radius:2px 2px 0 0;box-shadow:inset -1px 0 0 #808080;"></div>
<div class="t" style="top:313.6px;font-size:12.5px;line-height:14.5px;left:896.7px;transform-origin:0 0;transform:scaleX(0.824);">Documents</div>
<div class="" style="left:959.5px;top:307px;width:61.0px;height:26px;background:#d4d0c8;border:1px solid;border-color:#fff #404040 #fff #fff;border-bottom:none;border-radius:2px 2px 0 0;box-shadow:inset -1px 0 0 #808080;"></div>
<div class="t" style="top:313.6px;font-size:12.5px;line-height:14.5px;left:973.0px;transform-origin:0 0;transform:scaleX(0.825);">History</div>
<div class="t" style="top:342.5px;font-size:12.5px;line-height:14.5px;left:392.9px;transform-origin:0 0;transform:scaleX(0.838);color:#0000ff;">Contact Address</div>
<div class="t" style="top:365.0px;font-size:12.5px;line-height:14.5px;left:392.9px;transform-origin:0 0;transform:scaleX(0.839);">Street:</div>
<div class="sk" style="left:449px;top:360px;width:234px;height:46px;background:#fff;"></div>
<div class="trk" style="left:665px;top:362px;width:16px;height:42px;"></div>
<div class="sb" style="left:665px;top:362px;width:16px;height:16px;"></div>
<div class="sb" style="left:665px;top:388px;width:16px;height:16px;"></div>
<svg class="a" style="left:670px;top:368px" width="7" height="4" shape-rendering="crispEdges"><path d="M3 0h1v1h1v1h1v1h1v1h-7v-1h1v-1h1v-1h1z" fill="#fff"/></svg>
<svg class="a" style="left:669px;top:367px" width="7" height="4" shape-rendering="crispEdges"><path d="M3 0h1v1h1v1h1v1h1v1h-7v-1h1v-1h1v-1h1z" fill="#808080"/></svg>
<svg class="a" style="left:670px;top:394px" width="7" height="4" shape-rendering="crispEdges"><path d="M0 0h7v1h-1v1h-1v1h-1v1h-1v-1h-1v-1h-1v-1h-1z" fill="#fff"/></svg>
<svg class="a" style="left:669px;top:393px" width="7" height="4" shape-rendering="crispEdges"><path d="M0 0h7v1h-1v1h-1v1h-1v1h-1v-1h-1v-1h-1v-1h-1z" fill="#808080"/></svg>
<div class="t" style="top:364.4px;font-size:11px;line-height:14px;left:453.4px;transform-origin:0 0;transform:scaleX(1.000);-webkit-text-stroke:0;">1 Geofront rd</div>
<div class="" style="left:517px;top:365px;width:1px;height:13px;background:#000;"></div>
<div class="t" style="top:410.3px;font-size:12.5px;line-height:14.5px;left:392.9px;transform-origin:0 0;transform:scaleX(0.851);">Suburb</div>
<div class="sk" style="left:449px;top:406px;width:234px;height:22px;background:#fff;"></div>
<div class="t" style="top:431.6px;font-size:12.5px;line-height:14.5px;left:392.9px;transform-origin:0 0;transform:scaleX(0.785);">State</div>
<div class="t" style="top:431.6px;font-size:12.5px;line-height:14.5px;left:438.2px;transform-origin:0 0;transform:scaleX(0.829);">Post Code</div>
<div class="t" style="top:431.6px;font-size:12.5px;line-height:14.5px;left:505.9px;transform-origin:0 0;transform:scaleX(0.853);">Map Reference:</div>
<div class="t" style="top:431.6px;font-size:12.5px;line-height:14.5px;left:599.0px;transform-origin:0 0;transform:scaleX(0.866);">Service Area</div>
<div class="sk" style="left:393px;top:450px;width:42px;height:22px;background:#fff;"></div>
<div class="sk" style="left:438px;top:450px;width:65px;height:22px;background:#fff;"></div>
<div class="sk" style="left:506px;top:450px;width:61px;height:22px;background:#fff;"></div>
<div class="rb" style="left:566px;top:449px;width:33px;height:24px;"></div>
<div class="t" style="top:455.0px;font-size:12.5px;line-height:14.5px;left:566px;width:33px;text-align:center;transform-origin:50% 0;transform:scaleX(0.867);">MRef</div>
<div class="sk" style="left:599px;top:450px;width:84px;height:22px;background:#fff;"></div>
<div class="sb" style="left:666px;top:452px;width:15px;height:18px;"></div>
<svg class="a" style="left:669px;top:459px" width="7" height="4" shape-rendering="crispEdges"><path d="M0 0h7v1h-1v1h-1v1h-1v1h-1v-1h-1v-1h-1v-1h-1z" fill="#000"/></svg>
<div class="t" style="top:482.1px;font-size:12.5px;line-height:14.5px;left:392.9px;transform-origin:0 0;transform:scaleX(0.857);">Country</div>
<div class="sk" style="left:449px;top:478px;width:234px;height:22px;background:#fff;"></div>
<div class="t" style="top:500.3px;font-size:12.5px;line-height:14.5px;left:392.9px;transform-origin:0 0;transform:scaleX(0.824);color:#0000ff;">Notes</div>
<div class="sk" style="left:393px;top:518px;width:291px;height:69px;background:#fff;"></div>
<div class="trk" style="left:666px;top:520px;width:16px;height:65px;"></div>
<div class="sb" style="left:666px;top:520px;width:16px;height:16px;"></div>
<div class="sb" style="left:666px;top:569px;width:16px;height:16px;"></div>
<svg class="a" style="left:671px;top:526px" width="7" height="4" shape-rendering="crispEdges"><path d="M3 0h1v1h1v1h1v1h1v1h-7v-1h1v-1h1v-1h1z" fill="#fff"/></svg>
<svg class="a" style="left:670px;top:525px" width="7" height="4" shape-rendering="crispEdges"><path d="M3 0h1v1h1v1h1v1h1v1h-7v-1h1v-1h1v-1h1z" fill="#808080"/></svg>
<svg class="a" style="left:671px;top:575px" width="7" height="4" shape-rendering="crispEdges"><path d="M0 0h7v1h-1v1h-1v1h-1v1h-1v-1h-1v-1h-1v-1h-1z" fill="#fff"/></svg>
<svg class="a" style="left:670px;top:574px" width="7" height="4" shape-rendering="crispEdges"><path d="M0 0h7v1h-1v1h-1v1h-1v1h-1v-1h-1v-1h-1v-1h-1z" fill="#808080"/></svg>
<div class="t" style="top:593.1px;font-size:12.5px;line-height:14.5px;left:392.3px;transform-origin:0 0;transform:scaleX(0.838);color:#0000ff;">Job Note</div>
<div class="sk" style="left:393px;top:610px;width:291px;height:68px;background:#fff;"></div>
<div class="trk" style="left:666px;top:612px;width:16px;height:64px;"></div>
<div class="sb" style="left:666px;top:612px;width:16px;height:16px;"></div>
<div class="sb" style="left:666px;top:660px;width:16px;height:16px;"></div>
<svg class="a" style="left:671px;top:618px" width="7" height="4" shape-rendering="crispEdges"><path d="M3 0h1v1h1v1h1v1h1v1h-7v-1h1v-1h1v-1h1z" fill="#fff"/></svg>
<svg class="a" style="left:670px;top:617px" width="7" height="4" shape-rendering="crispEdges"><path d="M3 0h1v1h1v1h1v1h1v1h-7v-1h1v-1h1v-1h1z" fill="#808080"/></svg>
<svg class="a" style="left:671px;top:666px" width="7" height="4" shape-rendering="crispEdges"><path d="M0 0h7v1h-1v1h-1v1h-1v1h-1v-1h-1v-1h-1v-1h-1z" fill="#fff"/></svg>
<svg class="a" style="left:670px;top:665px" width="7" height="4" shape-rendering="crispEdges"><path d="M0 0h7v1h-1v1h-1v1h-1v1h-1v-1h-1v-1h-1v-1h-1z" fill="#808080"/></svg>
<div class="t" style="top:343.9px;font-size:12.5px;line-height:14.5px;left:703.2px;transform-origin:0 0;transform:scaleX(0.801);color:#0000ff;">Contacts</div>
<div class="t" style="top:362.9px;font-size:12.5px;line-height:14.5px;left:701.9px;transform-origin:0 0;transform:scaleX(0.823);">Title:</div>
<div class="t" style="top:385.7px;font-size:12.5px;line-height:14.5px;left:701.9px;transform-origin:0 0;transform:scaleX(0.845);">Phone Work</div>
<div class="t" style="top:408.6px;font-size:12.5px;line-height:14.5px;left:701.9px;transform-origin:0 0;transform:scaleX(0.848);">Phone Home</div>
<div class="t" style="top:431.5px;font-size:12.5px;line-height:14.5px;left:701.9px;transform-origin:0 0;transform:scaleX(0.901);">Fax:</div>
<div class="t" style="top:455.2px;font-size:12.5px;line-height:14.5px;left:701.9px;transform-origin:0 0;transform:scaleX(0.851);">Mobile:</div>
<div class="t" style="top:478.0px;font-size:12.5px;line-height:14.5px;left:701.9px;transform-origin:0 0;transform:scaleX(0.803);">Email:</div>
<div class="t" style="top:500.8px;font-size:12.5px;line-height:14.5px;left:701.9px;transform-origin:0 0;transform:scaleX(0.814);">Web Site:</div>
<div class="t" style="top:524.1px;font-size:12.5px;line-height:14.5px;left:701.9px;transform-origin:0 0;transform:scaleX(0.843);">Industry</div>
<div class="sk" style="left:796px;top:358px;width:209px;height:23px;background:#fff;"></div>
<div class="sk" style="left:796px;top:381px;width:139px;height:23px;background:#fff;"></div>
<div class="sk" style="left:796px;top:404px;width:139px;height:23px;background:#fff;"></div>
<div class="sk" style="left:796px;top:427px;width:139px;height:23px;background:#fff;"></div>
<div class="sk" style="left:796px;top:450px;width:139px;height:23px;background:#fff;"></div>
<div class="sk" style="left:796px;top:473px;width:139px;height:23px;background:#fff;"></div>
<div class="rb" style="left:940px;top:473px;width:66px;height:22px;"></div>
<div class="t" style="top:477.9px;font-size:12.5px;line-height:14.5px;left:940px;width:66px;text-align:center;transform-origin:50% 0;transform:scaleX(0.797);">Email</div>
<div class="sk" style="left:796px;top:496px;width:209px;height:23px;background:#fff;"></div>
<div class="sk" style="left:796px;top:519px;width:160px;height:22px;background:#fff;"></div>
<div class="sb" style="left:939px;top:521px;width:15px;height:18px;"></div>
<svg class="a" style="left:942px;top:528px" width="7" height="4" shape-rendering="crispEdges"><path d="M0 0h7v1h-1v1h-1v1h-1v1h-1v-1h-1v-1h-1v-1h-1z" fill="#000"/></svg>
<div class="t" style="top:550.2px;font-size:12.5px;line-height:14.5px;left:703.2px;transform-origin:0 0;transform:scaleX(0.832);color:#0000ff;">Billing Address</div>
<div class="t" style="top:569.2px;font-size:12.5px;line-height:14.5px;left:701.9px;transform-origin:0 0;transform:scaleX(0.816);">Billing Id:</div>
<div class="sk" style="left:796px;top:564px;width:145px;height:22px;background:#fff;"></div>
<div class="rb" style="left:941px;top:564px;width:21px;height:22px;"></div>
<svg style="left:943px;top:566px" width="18" height="18"><path d="M7.500 10.500l-5 5" stroke="#7a5a50" stroke-width="3.600" stroke-linecap="round"/><path d="M7.500 10.500l-5 5" stroke="#f08a28" stroke-width="2.200" stroke-linecap="round"/><circle cx="10.800" cy="6.700" r="4.800" fill="#c4e4fc" stroke="#6aa2dc" stroke-width="1.300"/><circle cx="9.500" cy="5.200" r="1.800" fill="#f0faff"/></svg>
<div class="t" style="top:589.4px;font-size:12.5px;line-height:14.5px;left:701.9px;transform-origin:0 0;transform:scaleX(0.807);">Billing</div>
<div class="t" style="top:605.2px;font-size:12.5px;line-height:14.5px;left:701.9px;transform-origin:0 0;transform:scaleX(0.855);">Address</div>
<div class="sk" style="left:796px;top:587px;width:215px;height:61px;background:#fff;"></div>
<div class="trk" style="left:993px;top:589px;width:16px;height:57px;"></div>
<div class="sb" style="left:993px;top:589px;width:16px;height:16px;"></div>
<div class="sb" style="left:993px;top:630px;width:16px;height:16px;"></div>
<svg class="a" style="left:998px;top:595px" width="7" height="4" shape-rendering="crispEdges"><path d="M3 0h1v1h1v1h1v1h1v1h-7v-1h1v-1h1v-1h1z" fill="#fff"/></svg>
<svg class="a" style="left:997px;top:594px" width="7" height="4" shape-rendering="crispEdges"><path d="M3 0h1v1h1v1h1v1h1v1h-7v-1h1v-1h1v-1h1z" fill="#808080"/></svg>
<svg class="a" style="left:998px;top:636px" width="7" height="4" shape-rendering="crispEdges"><path d="M0 0h7v1h-1v1h-1v1h-1v1h-1v-1h-1v-1h-1v-1h-1z" fill="#fff"/></svg>
<svg class="a" style="left:997px;top:635px" width="7" height="4" shape-rendering="crispEdges"><path d="M0 0h7v1h-1v1h-1v1h-1v1h-1v-1h-1v-1h-1v-1h-1z" fill="#808080"/></svg>
<div class="t" style="top:651.7px;font-size:12.5px;line-height:14.5px;left:701.9px;transform-origin:0 0;transform:scaleX(0.839);">Invoice terms:</div>
<div class="sk" style="left:796px;top:649px;width:221px;height:25px;background:#fff;"></div>
<div class="sb" style="left:999px;top:651px;width:16px;height:21px;"></div>
<svg class="a" style="left:1003px;top:659px" width="7" height="4" shape-rendering="crispEdges"><path d="M0 0h7v1h-1v1h-1v1h-1v1h-1v-1h-1v-1h-1v-1h-1z" fill="#000"/></svg>
<div class="t" style="top:683.6px;font-size:12.5px;line-height:14.5px;left:702.9px;transform-origin:0 0;transform:scaleX(0.846);color:#fff;">Default Invoice:</div>
<div class="t" style="top:682.6px;font-size:12.5px;line-height:14.5px;left:701.9px;transform-origin:0 0;transform:scaleX(0.846);color:#808080;">Default Invoice:</div>
<div class="sk" style="left:796px;top:676px;width:221px;height:26px;background:#d4d0c8;"></div>
<div class="sb" style="left:999px;top:678px;width:16px;height:22px;"></div>
<svg class="a" style="left:1004px;top:688px" width="7" height="4" shape-rendering="crispEdges"><path d="M0 0h7v1h-1v1h-1v1h-1v1h-1v-1h-1v-1h-1v-1h-1z" fill="#fff"/></svg>
<svg class="a" style="left:1003px;top:687px" width="7" height="4" shape-rendering="crispEdges"><path d="M0 0h7v1h-1v1h-1v1h-1v1h-1v-1h-1v-1h-1v-1h-1z" fill="#808080"/></svg>
</body></html>
